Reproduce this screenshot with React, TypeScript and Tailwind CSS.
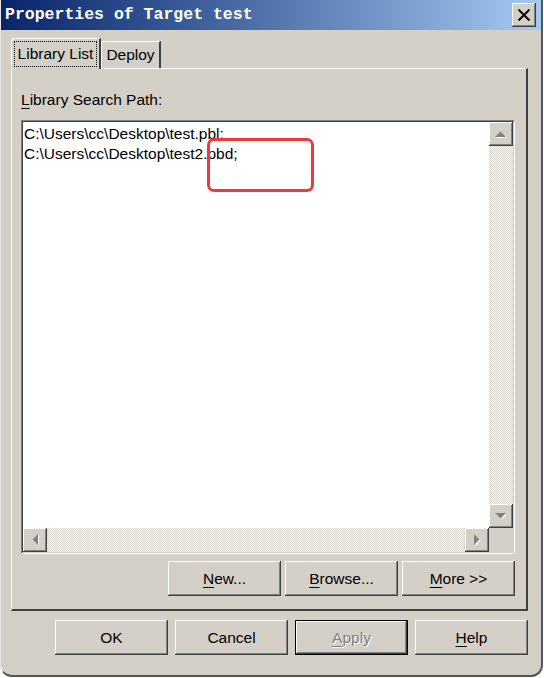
import React from 'react';

const raised =
  'shadow-[inset_-1px_-1px_0_#404040,inset_1px_1px_0_#ffffff,inset_-2px_-2px_0_#808080,inset_2px_2px_0_#d4d0c8]';

const Arrow = ({ dir }: { dir: 'up' | 'down' | 'left' | 'right' }) => {
  const pts: Record<string, string> = {
    up: '0,6 5.5,0.5 11,6',
    down: '0,0 11,0 5.5,5.5',
    left: '6,0 6,11 0.5,5.5',
    right: '0,0 0,11 5.5,5.5',
  };
  const vertical = dir === 'up' || dir === 'down';
  return (
    <svg width={vertical ? 12 : 7} height={vertical ? 7 : 12} viewBox={vertical ? '0 0 12 7' : '0 0 7 12'}>
      <polygon points={pts[dir]} fill="#ffffff" transform="translate(1,1)" />
      <polygon points={pts[dir]} fill="#808080" />
    </svg>
  );
};

const ScrollBtn = ({ dir }: { dir: 'up' | 'down' | 'left' | 'right' }) => (
  <div className={`w-[24px] h-[24px] bg-[#d4d0c8] flex items-center justify-center ${raised}`}>
    <Arrow dir={dir} />
  </div>
);

const Btn = ({
  label,
  u,
  rest,
  def,
  disabled,
}: {
  label?: string;
  u?: string;
  rest?: string;
  def?: boolean;
  disabled?: boolean;
}) => (
  <div className={`w-[113px] h-[35px] bg-[#d4d0c8] ${def ? 'border border-black' : ''}`}>
    <div
      className={`w-full h-full flex items-center justify-center ${raised} ${
        disabled ? 'text-[#808080] [text-shadow:1px_1px_0_#ffffff]' : 'text-black'
      }`}
    >
      {label ? (
        <span>{label}</span>
      ) : (
        <span>
          <span className="underline underline-offset-[3px]">{u}</span>
          {rest}
        </span>
      )}
    </div>
  </div>
);

export default function App() {
  return (
    <div className="w-[544px] h-[678px] bg-white font-['Liberation_Sans',Arial,sans-serif] text-[15.5px] text-black">
      <div className="relative w-[543px] h-[677px] bg-[#d4d0c8] border-l border-l-[#e8e6e2] border-r-2 border-b-2 border-[#555555] rounded-b-[12px] overflow-hidden flex flex-col">
        {/* title bar */}
        <div className="h-[30px] shrink-0 bg-linear-to-r from-[#0a246a] to-[#a6caf0] flex items-center justify-between pl-[4px] pr-[5px]">
          <span className="font-['Liberation_Mono',monospace] font-bold text-[16.5px] text-white">
            Properties of Target test
          </span>
          <div className={`w-[24px] h-[24px] bg-[#d4d0c8] flex items-center justify-center ${raised}`}>
            <svg width="14" height="12" viewBox="0 0 14 12">
              <path d="M1.5 0.5 L12.5 11.5 M12.5 0.5 L1.5 11.5" stroke="#000" strokeWidth="2" />
            </svg>
          </div>
        </div>

        {/* tabs */}
        <div className="mt-[8px] ml-[10px] h-[30px] flex items-end">
          <div className="relative z-10 -mb-px h-[31px] w-[90px] bg-[#d4d0c8] border-t border-l border-white rounded-tl-[3px] border-r-2 border-r-[#404040] flex p-[2px]">
            <div className="flex-1 border border-dotted border-black flex items-center justify-center">
              Library List
            </div>
          </div>
          <div className="h-[27px] w-[60px] bg-[#d4d0c8] border-t border-l border-white rounded-tl-[2px] border-r-2 border-r-[#404040] flex items-center justify-center">
            Deploy
          </div>
        </div>

        {/* panel */}
        <div className="ml-[10px] w-[517px] h-[543px] shrink-0 border-t border-l border-white border-r-2 border-b-2 border-r-[#404040] border-b-[#404040] flex flex-col pl-[9px] pr-[11px]">
          <div className="mt-[21px] h-[20px] leading-[20px]">
            <span className="underline underline-offset-[3px]">L</span>ibrary Search Path:
          </div>

          {/* list box */}
          <div className="mt-[10px] w-[494px] h-[434px] border-t border-l border-[#808080] border-b border-r border-b-white border-r-white">
            <div className="w-full h-full border-t border-l border-[#404040] border-b border-r border-b-[#d4d0c8] border-r-[#d4d0c8] grid grid-cols-[1fr_24px] grid-rows-[1fr_24px]">
              <div className="bg-white pl-[1px] pt-[2px] leading-[20px] whitespace-pre">
                <div>C:\Users\cc\Desktop\test.pbl;</div>
                <div>C:\Users\cc\Desktop\test2.pbd;</div>
              </div>
              <div className="flex flex-col">
                <ScrollBtn dir="up" />
                <div className="flex-1 bg-[repeating-conic-gradient(#d4d0c8_0%_25%,#ffffff_0%_50%)] bg-size-[2px_2px]" />
                <ScrollBtn dir="down" />
              </div>
              <div className="flex">
                <ScrollBtn dir="left" />
                <div className="flex-1 bg-[repeating-conic-gradient(#d4d0c8_0%_25%,#ffffff_0%_50%)] bg-size-[2px_2px]" />
                <ScrollBtn dir="right" />
              </div>
              <div className="bg-[#d4d0c8]" />
            </div>
          </div>

          <div className="mt-[7px] flex justify-end gap-[4px]">
            <Btn u="N" rest="ew..." />
            <Btn u="B" rest="rowse..." />
            <Btn u="M" rest="ore >>" />
          </div>
        </div>

        {/* dialog buttons */}
        <div className="mt-[9px] pl-[54px] flex gap-[7px]">
          <Btn label="OK" />
          <Btn label="Cancel" />
          <Btn u="A" rest="pply" def disabled />
          <Btn u="H" rest="elp" />
        </div>

        {/* annotation */}
        <div className="absolute left-[206px] top-[138px] w-[107px] h-[54px] border-[3px] border-[#ee3a3f] rounded-[7px]" />
      </div>
    </div>
  );
}
